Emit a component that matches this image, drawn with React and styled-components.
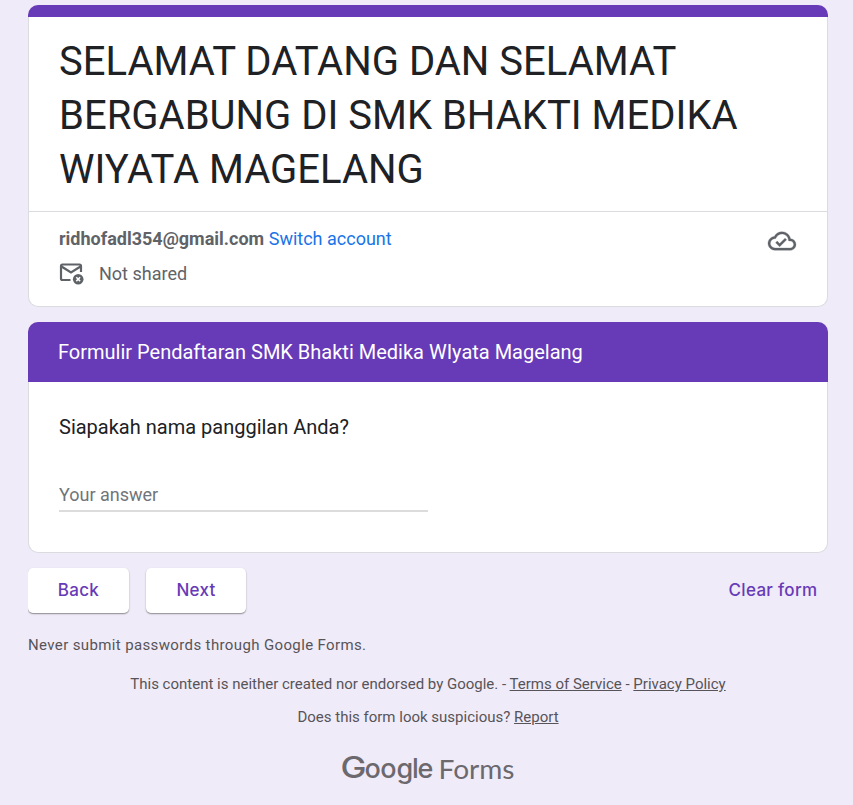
import React from "react";
import styled, { createGlobalStyle } from "styled-components";

const GlobalStyle = createGlobalStyle`
  * { box-sizing: border-box; }
  body {
    margin: 0;
    background: #f0ebf8;
    font-family: Roboto, "Liberation Sans", sans-serif;
    color: #202124;
  }
`;

const Page = styled.main`
  width: 800px;
  height: 805px;
  margin: 0 0 0 28px;
  padding-top: 5px;
  display: flex;
  flex-direction: column;
  overflow: hidden;
`;

const HeaderCard = styled.section`
  height: 302px;
  background: linear-gradient(#673ab7 12px, #dadce0 12px);
  padding: 12px 1px 1px;
  border-radius: 10px;
  overflow: hidden;
`;

const HeaderBody = styled.div`
  height: 289px;
  background: #fff;
  border-radius: 0 0 9px 9px;
`;

const Title = styled.h1`
  height: 195px;
  margin: 0;
  padding: 18px 30px 0;
  border-bottom: 1px solid #dadce0;
  font-size: 40px;
  line-height: 54px;
  font-weight: 400;
`;

const Account = styled.div`
  display: flex;
  justify-content: space-between;
  padding: 14px 30px 0;
  color: #5f6368;
  font-size: 18px;
  line-height: 25px;
`;

const AccountLine = styled.div`
  display: flex;
  align-items: center;
  gap: ${(p) => p.$gap}px;
  margin-bottom: 10px;
  white-space: nowrap;
`;

const Email = styled.strong`
  font-weight: 700;
`;

const Link = styled.a`
  color: #1a73e8;
`;

const CloudIcon = styled.svg`
  width: 28px;
  height: 28px;
  margin: 1px 1px 0 0;
  overflow: visible;
  fill: #5f6368;
  stroke: #5f6368;
  stroke-width: 0.25;
`;

const MailIcon = styled.svg`
  width: 25px;
  height: 25px;
`;

const QuestionCard = styled.section`
  height: 231px;
  margin-top: 15px;
  background: #dadce0;
  padding: 0 0 1px;
  border-radius: 10px;
  overflow: hidden;
`;

const SectionHeading = styled.h2`
  height: 60px;
  margin: 0;
  padding: 0 30px;
  background: #673ab7;
  color: #fff;
  font-size: 20px;
  line-height: 60px;
  font-weight: 400;
`;

const QuestionBody = styled.div`
  height: 170px;
  margin: 0 1px;
  padding: 30px 30px 0;
  background: #fff;
  border-radius: 0 0 9px 9px;
`;

const Question = styled.label`
  display: block;
  font-size: 20px;
  line-height: 30px;
`;

const Answer = styled.input`
  display: block;
  width: 369px;
  height: 35px;
  margin-top: 35px;
  padding: 2px 0 0;
  border: 0;
  border-bottom: 2px solid #dcdcdd;
  outline: 0;
  background: transparent;
  color: #202124;
  font: 400 18px Roboto, sans-serif;
  &::placeholder { color: #70757a; opacity: 1; }
`;

const Actions = styled.div`
  display: flex;
  align-items: center;
  gap: 17px;
  height: 45px;
  margin-top: 15px;
`;

const Button = styled.button`
  width: ${(p) => p.$width}px;
  height: 45px;
  padding: 0 0 2px;
  border: 0;
  border-radius: 5px;
  background: ${(p) => (p.$plain ? "transparent" : "#fff")};
  box-shadow: ${(p) => (p.$plain ? "none" : "0 1px 2px rgba(0,0,0,.24), 0 1px 1px rgba(0,0,0,.22)")};
  color: #673ab7;
  font: 500 17px Inter, sans-serif;
  letter-spacing: 0.3px;
  margin-left: ${(p) => (p.$plain ? "auto" : "0")};
`;

const Warning = styled.p`
  margin: 22px 0 0;
  font-size: 15px;
  line-height: 20px;
  letter-spacing: 0.37px;
  color: #575459;
`;

const Notice = styled.p`
  margin: ${(p) => p.$top}px 0 0;
  text-align: center;
  font-size: 15px;
  line-height: 20px;
  color: #575459;
  white-space: nowrap;
  a { text-decoration: underline; }
`;

const Logo = styled.svg`
  display: block;
  width: 180px;
  height: 44px;
  margin: 22px 0 0 310px;
  fill: #6b686e;
  font-family: Lato, sans-serif;
`;

export default function App() {
  return (
    <>
      <GlobalStyle />
      <Page>
        <HeaderCard>
          <HeaderBody>
            <Title>SELAMAT DATANG DAN SELAMAT BERGABUNG DI SMK BHAKTI MEDIKA WIYATA MAGELANG</Title>
            <Account>
              <div>
                <AccountLine $gap={4.5}>
                  <Email>ridhofadl354@gmail.com</Email>
                  <Link>Switch account</Link>
                </AccountLine>
                <AccountLine $gap={15}>
                  <MailIcon viewBox="0 0 25 25" fill="none">
                    <path d="M11.500 19H3.500a1.500 1.500 0 0 1-1.500-1.500V5a1.500 1.500 0 0 1 1.500-1.500H20.500a1.500 1.500 0 0 1 1.500 1.500V11M2.500 5.500l9.500 6L21.500 5.500" stroke="#5f6368" strokeWidth="2.200" />
                    <circle cx="19.200" cy="18.200" r="5.300" fill="#5f6368" />
                    <path d="m17.300 16.300 3.800 3.800m0-3.800-3.800 3.800" stroke="#fff" strokeWidth="1.500" />
                  </MailIcon>
                  <span>Not shared</span>
                </AccountLine>
              </div>
              <CloudIcon viewBox="0 0 24 24">
                <path d="M19.350 10.040C18.670 6.590 15.640 4 12 4 9.110 4 6.600 5.640 5.350 8.040 2.340 8.360 0 10.910 0 14c0 3.310 2.690 6 6 6h13c2.760 0 5-2.240 5-5 0-2.640-2.050-4.780-4.650-4.960zM19 18H6c-2.210 0-4-1.790-4-4 0-2.050 1.530-3.760 3.560-3.970l1.070-.110.5-.950C8.080 7.140 9.940 6 12 6c2.620 0 4.880 1.860 5.390 4.430l.3 1.500 1.530.110c1.560.100 2.780 1.410 2.780 2.960 0 1.650-1.350 3-3 3zm-9-3.820-2.090-2.090L6.500 13.500 10 17l6.010-6.010-1.410-1.410z" />
              </CloudIcon>
            </Account>
          </HeaderBody>
        </HeaderCard>
        <QuestionCard>
          <SectionHeading>Formulir Pendaftaran SMK Bhakti Medika WIyata Magelang</SectionHeading>
          <QuestionBody>
            <Question htmlFor="answer">Siapakah nama panggilan Anda?</Question>
            <Answer id="answer" placeholder="Your answer" />
          </QuestionBody>
        </QuestionCard>
        <Actions>
          <Button $width={101}>Back</Button>
          <Button $width={100}>Next</Button>
          <Button $width={110} $plain>Clear form</Button>
        </Actions>
        <Warning>Never submit passwords through Google Forms.</Warning>
        <Notice $top={19}>
          This content is neither created nor endorsed by Google. - <a>Terms of Service</a> - <a>Privacy Policy</a>
        </Notice>
        <Notice $top={13}>
          Does this form look suspicious? <a>Report</a>
        </Notice>
        <Logo viewBox="0 0 180 44" aria-label="Google Forms">
          <text y="29.300" fontFamily="Inter" fontWeight="500" fontSize="27">
            <tspan x="2.400" fontSize="30.500" textLength="26" lengthAdjust="spacingAndGlyphs">G</tspan>
            <tspan x="26.500 42.300 58.500 73.900 79.600">oogle</tspan>
          </text>
          <text x="100.500" y="30" fontSize="27.500" textLength="76" lengthAdjust="spacingAndGlyphs">Forms</text>
        </Logo>
      </Page>
    </>
  );
}
